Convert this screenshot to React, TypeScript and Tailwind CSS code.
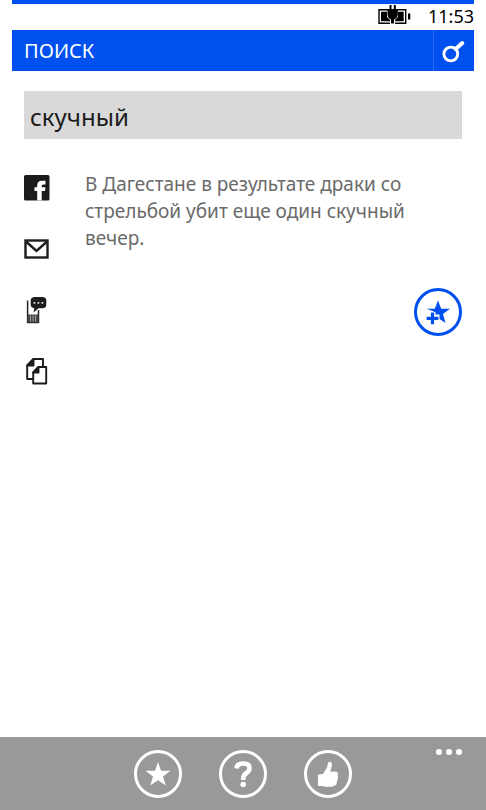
import { useState, type ReactNode } from 'react';

const QUOTE = 'В Дагестане в результате драки со стрельбой убит еще один скучный вечер.';

function BatteryIcon() {
  return (
    <svg width="34" height="22" viewBox="0 0 34 22" aria-hidden="true">
      <path d="M10 5.700H1V19.200H12M19 5.700H27.700V19.200H17" fill="none" stroke="#000" strokeWidth="1.400" />
      <path d="M3 7.700H9V13L12 16V17.200H3ZM20 7.700H25.700V17.200H17V16L20 13Z" fill="#000" />
      <path d="M30 9.500H32.300V15.500H30Z" fill="#000" />
      <path d="M11.500 1H13.500V5H15.800V1H17.800V5H19.800V10.500Q19.500 14.500 16 15.500V19.500H13V15.500Q9.800 14.500 9.500 10.500V5H11.500Z" fill="#000" />
    </svg>
  );
}

function SearchIcon() {
  return (
    <svg width="24" height="24" viewBox="0 0 24 24" fill="none" stroke="#fff" aria-hidden="true">
      <circle cx="8.800" cy="15" r="6.900" strokeWidth="2.900" />
      <path d="M14 9.800L20.300 4" strokeWidth="4" strokeLinecap="round" />
    </svg>
  );
}

function FacebookIcon() {
  return (
    <svg width="26" height="26" viewBox="0 0 26 26" aria-hidden="true">
      <rect width="25.500" height="25.500" rx="1.500" fill="#1c1c1c" />
      <path
        d="M13.200 25.500V16H10.500V12.200H13.200V10.500Q13.200 5.700 17.800 5.700H21.500V9.500H19.500Q17.700 9.500 17.700 11.200V12.200H21.500L21 16H17.700V25.500Z"
        fill="#fff"
      />
    </svg>
  );
}

function MailIcon() {
  return (
    <svg width="26" height="26" viewBox="0 0 26 26" fill="none" stroke="#1c1c1c" aria-hidden="true">
      <rect x="1.500" y="4.500" width="22" height="17" strokeWidth="2.400" />
      <path d="M2.500 6L12.500 15L22.500 6" strokeWidth="2.400" />
    </svg>
  );
}

function MessageIcon() {
  return (
    <svg width="26" height="28" viewBox="0 0 26 28" aria-hidden="true">
      <path d="M3.600 4.500V26.500H14.500V14" fill="none" stroke="#222" strokeWidth="1.500" />
      <path d="M3.500 18.500H14.500V26.500H3.500Z" fill="#444" />
      <path d="M6.500 19.500V25.500M9 19.500V25.500M11.500 19.500V25.500" stroke="#bbb" strokeWidth=".8" />
      <path
        d="M11 1H18.500Q22.300 1 22.300 4.500V8.500Q22.300 12.300 18.500 12.300H14.500L9.500 16.500L10.300 12.200Q6.700 11.500 6.700 8.500V4.500Q6.700 1 11 1Z"
        fill="#1c1c1c"
      />
      <path d="M9.500 6H11.300V7.800H9.500ZM13.500 6H15.300V7.800H13.500ZM17.500 6H19.300V7.800H17.500Z" fill="#ddd" />
    </svg>
  );
}

function CopyIcon() {
  return (
    <svg width="26" height="28" viewBox="0 0 26 28" stroke="#1c1c1c" strokeWidth="1.900" strokeLinejoin="round" aria-hidden="true">
      <path d="M9.500 2H19V22H3.200V8.500Z" fill="#fff" />
      <path d="M9.500 2V8.500H3.200Z" fill="#1c1c1c" />
      <path d="M14.500 10H22.200V26.500H9.200V15.500Z" fill="#fff" />
      <path d="M14.500 10V15.500H9.200Z" fill="#1c1c1c" />
    </svg>
  );
}

function AddFavouriteIcon() {
  return (
    <svg className="shrink-0" width="48" height="48" viewBox="0 0 48 48" aria-hidden="true">
      <path
        d="M24 12.500L27.200 20.700H36L29 26L31.500 35L25.500 31V26.500H20V23.500L12.500 20.700H20.800Z"
        fill="#0050ef"
      />
      <path d="M18.500 24V36M12 30.300H25" stroke="#fff" strokeWidth="6" />
      <path d="M18.500 24.500V36.200M12.600 30.400H24.400" stroke="#0050ef" strokeWidth="3.200" />
    </svg>
  );
}

function StarIcon() {
  return (
    <svg className="shrink-0" width="48" height="48" viewBox="0 0 48 48" fill="#fff" aria-hidden="true">
      <path d="M24 12L27 20.800H36.500L29 26.500L31.800 35.500L24 30.200L16.200 35.500L19 26.500L11.500 20.800H21Z" />
    </svg>
  );
}

function HelpIcon() {
  return (
    <svg className="shrink-0" width="48" height="48" viewBox="0 0 48 48" fill="none" aria-hidden="true">
      <path d="M17.500 18.500Q18 13.500 24 13.500Q30.500 13.500 30.500 18.200Q30.500 21 27.500 23Q24.200 25.200 24.200 28.500V30" stroke="#fff" strokeWidth="4.600" />
      <circle cx="24.200" cy="34.500" r="2.800" fill="#fff" />
    </svg>
  );
}

function LikeIcon() {
  return (
    <svg className="shrink-0" width="48" height="48" viewBox="0 0 48 48" fill="#fff" aria-hidden="true">
      <path d="M14 24.500L19 24L23 17.500L24 13Q24.800 11.300 26.500 12Q28.500 13 27.800 16L26.300 21.500L32.500 21.800Q34.500 22.500 33.800 25Q34.500 27 33.500 28.500Q34 30.500 32.700 32Q33 34.500 31 35.500L27.500 36.800H21L18.500 36H14Z" />
    </svg>
  );
}

const SHARE_ACTIONS = [
  { label: 'Facebook', icon: <FacebookIcon /> },
  { label: 'Email', icon: <MailIcon /> },
  { label: 'SMS', icon: <MessageIcon /> },
  { label: 'Копировать', icon: <CopyIcon /> },
];

function BarButton({ label, children }: { label: string; children: ReactNode }) {
  return (
    <button
      type="button"
      aria-label={label}
      className="flex size-12 items-center justify-center rounded-full border-3 border-white"
    >
      {children}
    </button>
  );
}

export default function App() {
  const [query, setQuery] = useState('скучный');

  return (
    <div className="flex min-h-screen flex-col bg-white font-['Noto_Sans','Open_Sans',sans-serif]">
      <div className="mx-3 border-t-4 border-[#0050ef]">
        <div className="flex h-[26px] items-start justify-end gap-4">
          <BatteryIcon />
          <time className="text-lg leading-6 text-black">11:53</time>
        </div>
      </div>

      <header className="mx-3 flex h-[41px] items-stretch bg-[#0050ef] text-white">
        <h1 className="flex-1 self-center pl-3 text-xl leading-6">ПОИСК</h1>
        <button
          type="button"
          aria-label="Найти"
          className="flex w-[41px] items-center justify-center border-l border-[#2a6cf2]"
        >
          <SearchIcon />
        </button>
      </header>

      <main className="flex-1 px-6 pt-5">
        <input
          type="text"
          aria-label="Поиск"
          value={query}
          onChange={(e) => setQuery(e.target.value)}
          className="block h-12 w-full bg-[#d9d9d9] px-1.5 pt-0.5 text-2xl text-[#1c1c1c] outline-none"
        />

        <article className="mt-8 flex">
          <ul className="mt-[3px] flex shrink-0 flex-col gap-[33px]">
            {SHARE_ACTIONS.map(({ label, icon }) => (
              <li key={label}>
                <button type="button" aria-label={label} className="flex h-7 w-[26px] items-center justify-center">
                  {icon}
                </button>
              </li>
            ))}
          </ul>
          <div className="flex flex-1 flex-col pl-[35px]">
            <p className="max-w-[340px] text-[19px] leading-[27px] text-[#6a6a6a]">{QUOTE}</p>
            <button
              type="button"
              aria-label="Добавить в избранное"
              className="mt-9 flex size-12 items-center justify-center self-end rounded-full border-3 border-[#0050ef]"
            >
              <AddFavouriteIcon />
            </button>
          </div>
        </article>
      </main>

      <footer className="relative flex h-[73px] items-center justify-center gap-[37px] bg-[#999999]">
        <BarButton label="Избранное">
          <StarIcon />
        </BarButton>
        <BarButton label="Помощь">
          <HelpIcon />
        </BarButton>
        <BarButton label="Оценить">
          <LikeIcon />
        </BarButton>
        <button type="button" aria-label="Ещё" className="absolute top-3 right-6 flex gap-1">
          <span className="size-1.5 rounded-full bg-white" />
          <span className="size-1.5 rounded-full bg-white" />
          <span className="size-1.5 rounded-full bg-white" />
        </button>
      </footer>
    </div>
  );
}
